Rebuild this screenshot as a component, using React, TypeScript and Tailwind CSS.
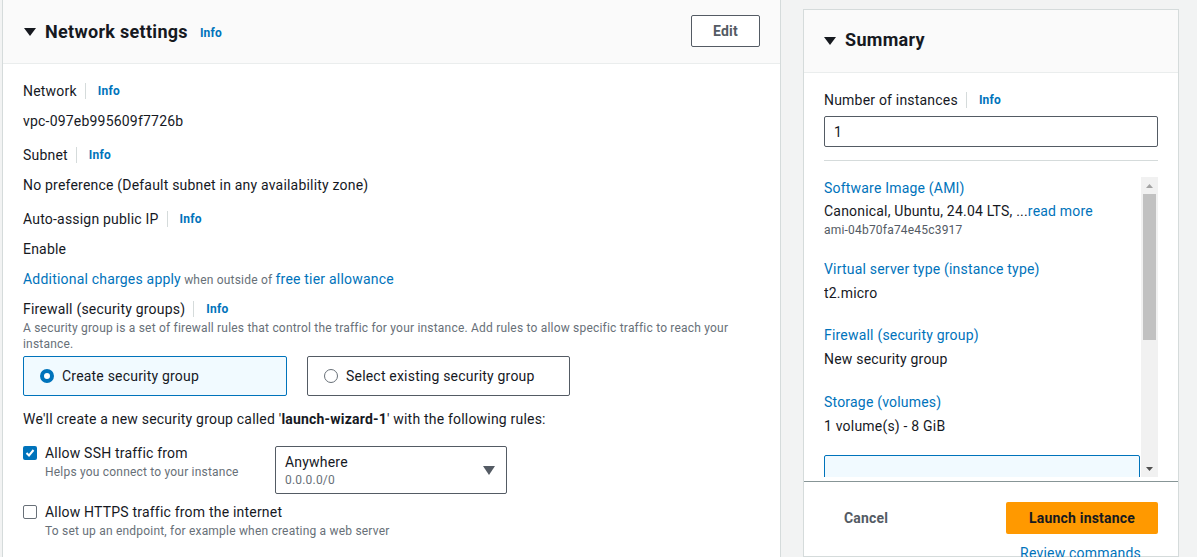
import React from 'react';

const font = { fontFamily: 'Roboto, "Liberation Sans", Arial, sans-serif' };

function Caret() {
  return (
    <svg width="12" height="8" viewBox="0 0 12 8" className="shrink-0">
      <polygon points="0,0 12,0 6,8" fill="#16191f" />
    </svg>
  );
}

function Info() {
  return (
    <>
      <span className="mx-2 h-4 border-l border-[#d5dbdb]" />
      <span className="ml-1 text-xs font-bold text-[#0073bb]">Info</span>
    </>
  );
}

function Label({ children }: { children: React.ReactNode }) {
  return (
    <div className="flex items-center h-[22px] text-sm text-[#16191f]">
      <span>{children}</span>
      <Info />
    </div>
  );
}

function Checkbox({ checked }: { checked?: boolean }) {
  if (checked) {
    return (
      <span className="mt-1 flex h-[14px] w-[14px] shrink-0 items-center justify-center rounded-[2px] bg-[#0073bb]">
        <svg width="10" height="10" viewBox="0 0 10 10">
          <polyline points="1.5,5 4,7.5 8.5,2" fill="none" stroke="white" strokeWidth="2" />
        </svg>
      </span>
    );
  }
  return <span className="mt-1 h-[14px] w-[14px] shrink-0 rounded-[2px] border border-[#687078] bg-white" />;
}

export default function App() {
  return (
    <div style={font} className="flex h-[557px] overflow-hidden bg-[#f2f3f3] tracking-[0.2px] text-[#16191f]">
      {/* Network settings panel */}
      <section className="ml-[2px] w-[779px] shrink-0 border-x border-[#d5dbdb] bg-white">
        <header className="flex h-[64px] items-center justify-between border-b border-[#eaeded] bg-[#fafafa] pl-[21px] pr-5">
          <div className="flex items-center">
            <Caret />
            <h2 className="ml-[9px] text-lg font-bold tracking-[0.3px]">Network settings</h2>
            <span className="ml-3 mt-[3px] text-xs font-bold text-[#0073bb]">Info</span>
          </div>
          <button className="mt-[-2px] h-[32px] w-[69px] rounded-[2px] border border-[#545b64] bg-white text-sm font-bold text-[#545b64]">
            Edit
          </button>
        </header>

        <div className="px-5 pt-4 text-sm leading-[22px]">
          <Label>Network</Label>
          <div className="mt-2">vpc-097eb995609f7726b</div>

          <div className="mt-3">
            <Label>Subnet</Label>
          </div>
          <div className="mt-2">No preference (Default subnet in any availability zone)</div>

          <div className="mt-3">
            <Label>Auto-assign public IP</Label>
          </div>
          <div className="mt-2">Enable</div>

          <div className="mt-2">
            <span className="text-[#0073bb]">Additional charges apply</span>
            <span className="text-xs text-[#687078]"> when outside of </span>
            <span className="text-[#0073bb]">free tier allowance</span>
          </div>

          <div className="mt-2">
            <Label>Firewall (security groups)</Label>
          </div>
          <p className="max-w-[720px] text-xs leading-4 text-[#687078]">
            A security group is a set of firewall rules that control the traffic for your instance. Add rules to allow specific traffic to reach your instance.
          </p>

          <div className="mt-[4px] flex gap-5">
            <div className="flex h-[40px] w-[264px] items-center rounded-[2px] border border-[#0073bb] bg-[#f1faff] pl-4">
              <span className="h-[14px] w-[14px] rounded-full border-[4px] border-[#0073bb] bg-white" />
              <span className="ml-2">Create security group</span>
            </div>
            <div className="flex h-[40px] w-[263px] items-center rounded-[2px] border border-[#545b64] pl-4">
              <span className="h-[14px] w-[14px] rounded-full border border-[#687078] bg-white" />
              <span className="ml-2">Select existing security group</span>
            </div>
          </div>

          <div className="mt-3">
            We'll create a new security group called '<b>launch-wizard-1</b>' with the following rules:
          </div>

          <div className="mt-3 flex">
            <div className="flex w-[252px] gap-2">
              <Checkbox checked />
              <div>
                <div>Allow SSH traffic from</div>
                <div className="text-xs leading-4 text-[#687078]">Helps you connect to your instance</div>
              </div>
            </div>
            <div className="mt-[4px] flex h-[48px] w-[232px] items-center justify-between rounded-[2px] border border-[#545b64] pl-[9px] pr-[11px]">
              <div>
                <div className="leading-5">Anywhere</div>
                <div className="text-xs leading-4 text-[#687078]">0.0.0.0/0</div>
              </div>
              <svg width="12" height="9" viewBox="0 0 12 9">
                <polygon points="0,0 12,0 6,9" fill="#545b64" />
              </svg>
            </div>
          </div>

          <div className="mt-[7px] flex gap-2">
            <Checkbox />
            <div>
              <div>Allow HTTPS traffic from the internet</div>
              <div className="text-xs leading-4 text-[#687078]">To set up an endpoint, for example when creating a web server</div>
            </div>
          </div>

          <div className="mt-[14px] flex gap-2">
            <Checkbox />
            <div>Allow HTTP traffic from the internet</div>
          </div>
        </div>
      </section>

      {/* Summary panel */}
      <aside className="ml-[22px] mt-[9px] w-[376px] shrink-0 border border-[#d5dbdb] bg-white">
        <header className="flex h-[63px] items-center border-b border-[#eaeded] bg-[#fafafa] px-5">
          <Caret />
          <h2 className="ml-[9px] mt-[-2px] text-lg font-bold tracking-[0.3px]">Summary</h2>
        </header>

        <div className="px-5 pt-4 text-sm leading-[22px]">
          <Label>Number of instances</Label>
          <div className="mt-[5px] flex h-[31px] items-center rounded-[2px] border border-[#545b64] px-[9px]">1</div>
          <div className="mt-[13px] border-t border-[#d5dbdb]" />

          <div className="mt-4 flex h-[300px] overflow-hidden">
            <div className="w-[317px] shrink-0">
              <div className="text-[#0073bb]">Software Image (AMI)</div>
              <div className="mt-[1px]">
                Canonical, Ubuntu, 24.04 LTS, ...<span className="text-[#0073bb]">read more</span>
              </div>
              <div className="text-xs leading-4 text-[#545b64]">ami-04b70fa74e45c3917</div>

              <div className="mt-[20px] text-[#0073bb]">Virtual server type (instance type)</div>
              <div className="mt-[2px]">t2.micro</div>

              <div className="mt-5 text-[#0073bb]">Firewall (security group)</div>
              <div className="mt-[2px]">New security group</div>

              <div className="mt-[21px] text-[#0073bb]">Storage (volumes)</div>
              <div className="mt-[2px]">1 volume(s) - 8 GiB</div>

              <div className="mt-[18px] h-[60px] w-[316px] rounded-[2px] border border-[#0073bb] bg-[#f1faff]" />
            </div>

            {/* scrollbar */}
            <div className="flex w-[17px] shrink-0 flex-col bg-[#f1f1f1]">
              <div className="flex h-[17px] items-center justify-center">
                <svg width="7" height="4" viewBox="0 0 7 4">
                  <polygon points="0,4 7,4 3.5,0" fill="#a3a3a3" />
                </svg>
              </div>
              <div className="mx-[2px] h-[146px] bg-[#c1c1c1]" />
              <div className="flex-1" />
              <div className="flex h-[17px] items-center justify-center">
                <svg width="7" height="4" viewBox="0 0 7 4">
                  <polygon points="0,0 7,0 3.5,4" fill="#505050" />
                </svg>
              </div>
            </div>
          </div>
        </div>

        <footer className="mt-1 border-t border-[#879596] px-5 pt-5">
          <div className="flex items-center justify-between">
            <button className="h-[32px] px-5 text-sm font-bold text-[#545b64]">Cancel</button>
            <button className="h-[32px] w-[152px] rounded-[2px] bg-[#ff9900] text-sm font-bold text-[#16191f]">
              Launch instance
            </button>
          </div>
          <div className="mt-2 flex justify-end pr-[17px] text-sm leading-[22px] text-[#0073bb]">Review commands</div>
        </footer>
      </aside>
    </div>
  );
}
